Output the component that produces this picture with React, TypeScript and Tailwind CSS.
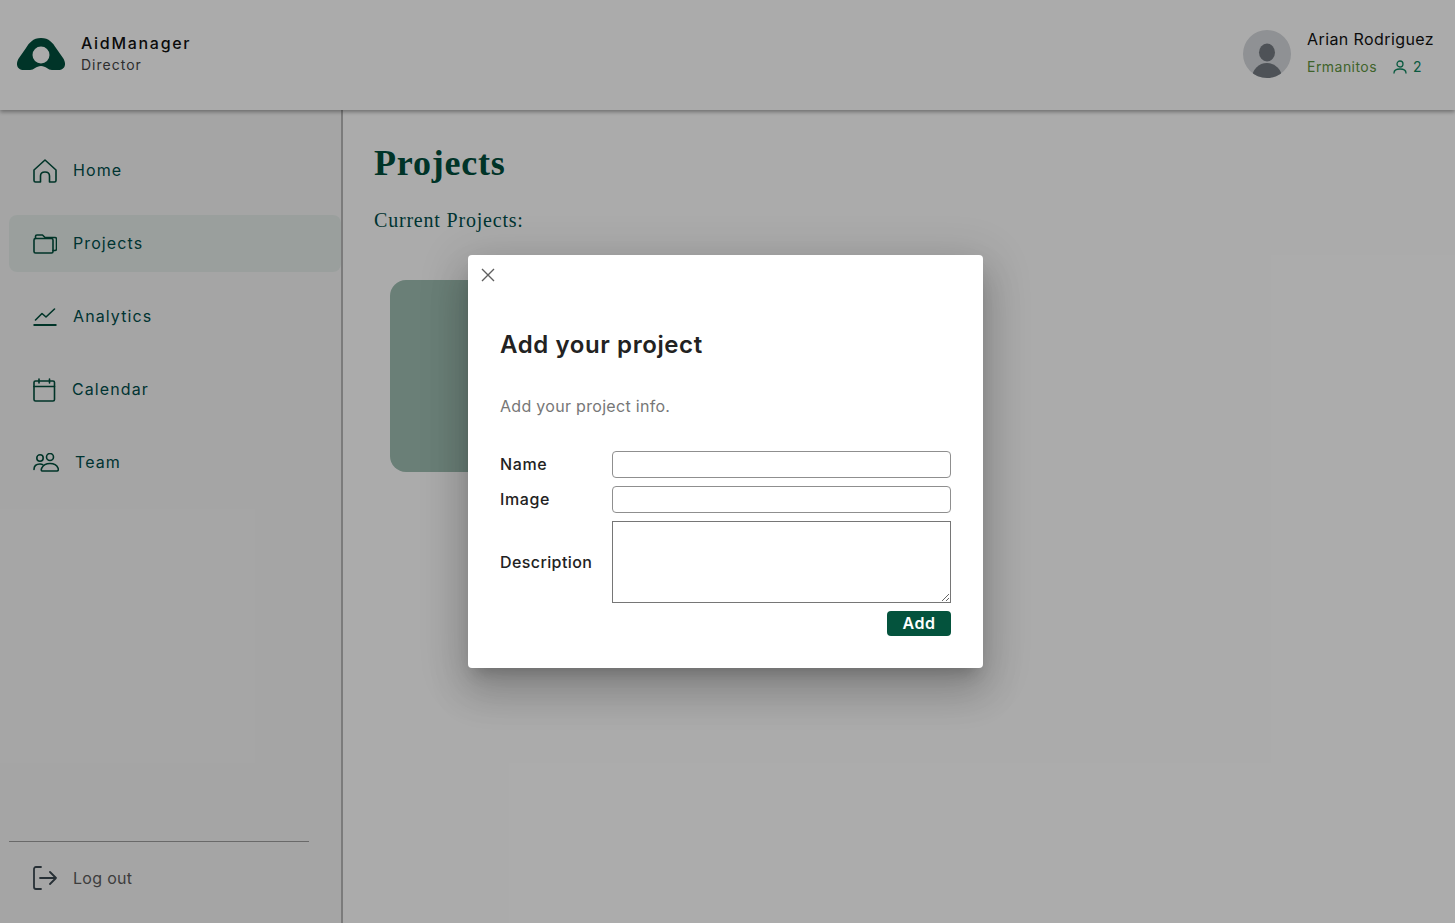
import React from "react";

const sans = "font-['Inter','Noto_Sans',sans-serif]";

function Logo() {
  return (
    <svg width="48" height="33" viewBox="0 0 48 33" className="shrink-0">
      <path
        fillRule="evenodd"
        fill="#004D3B"
        d="M24 0C16 0 12 5 9 10L2 20C-2 26 0 32 7 32H13C17 32 19 28 24 28C29 28 31 32 35 32H41C48 32 50 26 46 20L39 10C36 5 32 0 24 0ZM24 8.5A8.5 8.5 0 1 1 24 25.5A8.5 8.5 0 1 1 24 8.5Z"
      />
    </svg>
  );
}

function Avatar() {
  return (
    <svg width="48" height="48" viewBox="0 0 48 48" className="shrink-0">
      <circle cx="24" cy="24" r="24" fill="#D3D6DA" />
      <clipPath id="av">
        <circle cx="24" cy="24" r="24" />
      </clipPath>
      <g clipPath="url(#av)" fill="#747A80">
        <ellipse cx="24" cy="22.5" rx="8" ry="9" />
        <ellipse cx="24" cy="48" rx="15" ry="15" />
      </g>
    </svg>
  );
}

const stroke = {
  fill: "none",
  stroke: "#004D3B",
  strokeWidth: 1.6,
  strokeLinecap: "round" as const,
  strokeLinejoin: "round" as const,
};

function HomeIcon() {
  return (
    <svg width="24" height="24" viewBox="0 0 24 24" className="shrink-0" {...stroke}>
      <path d="M1 11L12 1L23 11V21.5C23 22.5 22.5 23 21.5 23H16.5V17C16.5 14.5 14.5 13 12 13C9.500 13 7.500 14.5 7.500 17V23H2.500C1.500 23 1 22.500 1 21.500Z" />
    </svg>
  );
}

function FolderIcon() {
  return (
    <svg width="24" height="20" viewBox="0 0 24 20" className="shrink-0" {...stroke}>
      <path d="M1 17V6C1 5 1.500 4.500 2.500 4.500H18.500C19.500 4.500 20 5 20 6V17.500C20 18.500 19.500 19 18.500 19H2.500C1.500 19 1 18.500 1 17.500Z" />
      <path d="M2.500 4.500V2.500C2.500 1.500 3 1 4 1H9.500L12 3.500H22C23 3.500 23.500 4 23.500 5V15C23.500 16 23 16.500 22 16.500H20" />
    </svg>
  );
}

function ChartIcon() {
  return (
    <svg width="24" height="18" viewBox="0 0 24 18" className="shrink-0" {...stroke}>
      <path d="M2.500 12L9 5.500L13 9L21.500 1" />
      <path d="M0.500 17H23.500" strokeWidth="2" strokeLinecap="butt" />
    </svg>
  );
}

function CalendarIcon() {
  return (
    <svg width="23" height="24" viewBox="0 0 23 24" className="shrink-0" {...stroke}>
      <rect x="1" y="3" width="20.500" height="20" rx="1.500" />
      <path d="M1 8.500H21.500M6 1V5M16.500 1V5" />
    </svg>
  );
}

function TeamIcon() {
  return (
    <svg width="26" height="19" viewBox="0 0 26 19" className="shrink-0" {...stroke}>
      <circle cx="7" cy="5" r="3.200" />
      <circle cx="17" cy="4" r="3.500" />
      <path d="M1 16.500C1 13 3.500 11 7 11C8 11 9 11.200 9.800 11.600" />
      <path d="M9.500 18C8 18 8 16.500 8.800 15C10 12.500 13 10.500 17 10.500C21 10.500 24 12.500 25 15C25.600 16.500 25.500 18 24 18Z" />
    </svg>
  );
}

function LogoutIcon() {
  const s = { ...stroke, stroke: "#3a4750", strokeWidth: 1.8 };
  return (
    <svg width="24" height="24" viewBox="0 0 24 24" className="shrink-0" {...s}>
      <path d="M8 1H3C1.800 1 1 1.800 1 3V21C1 22.200 1.800 23 3 23H8" />
      <path d="M7 12H23M17 6L23 12L17 18" />
    </svg>
  );
}

function NavItem({
  icon,
  label,
  active,
}: {
  icon: React.ReactNode;
  label: string;
  active?: boolean;
}) {
  return (
    <div
      className={`flex h-[57px] items-center gap-4 rounded-lg pl-6 ${active ? "bg-[#E3EBE8]" : ""}`}
    >
      {icon}
      <span className="pb-[2px] text-[16px] tracking-[1.1px] text-[#004D4B]">{label}</span>
    </div>
  );
}

export default function App() {
  return (
    <div className={`relative flex h-[923px] flex-col overflow-hidden bg-[#F4F4F4] ${sans}`}>
      {/* Header */}
      <header className="relative flex h-[110px] shrink-0 items-center justify-between bg-[#FDFDFD] pb-[2px] pl-[17px] pr-[21px] shadow-[0_2px_4px_rgba(0,0,0,0.35)]">
        <div className="flex items-center gap-4">
          <Logo />
          <div className="mb-[2px] flex flex-col gap-[2px]">
            <span className="text-[16px] leading-[22px] font-medium tracking-[1.7px] text-[#111]">
              AidManager
            </span>
            <span className="text-[14px] leading-[18px] tracking-[1px] text-[#444]">Director</span>
          </div>
        </div>
        <div className="flex items-center gap-4">
          <Avatar />
          <div className="flex flex-col gap-[8px] pb-[4px]">
            <span className="text-[16px] leading-[22px] tracking-[0.4px] text-[#111]">Arian Rodriguez</span>
            <div className="flex items-center gap-4">
              <span className="text-[14px] leading-[18px] tracking-[0.45px] text-[#5E9341]">Ermanitos</span>
              <span className="flex items-center gap-[6px] text-[14px] leading-[18px] text-[#10855F]">
                <svg width="14" height="14" viewBox="0 0 14 14" fill="none" stroke="#10855F" strokeWidth="1.300">
                  <circle cx="7" cy="4" r="3" />
                  <path d="M1 13C1 10 3.500 9 7 9C10.500 9 13 10 13 13" strokeLinecap="round" />
                </svg>
                2
              </span>
            </div>
          </div>
        </div>
      </header>

      <div className="flex min-h-0 flex-1">
        {/* Sidebar */}
        <aside className="flex w-[343px] shrink-0 flex-col justify-between border-r-2 border-[#b5b5b5] pb-[9px] pl-[9px] pt-[32px]">
          <nav className="flex flex-col gap-4">
            <NavItem icon={<HomeIcon />} label="Home" />
            <NavItem icon={<FolderIcon />} label="Projects" active />
            <NavItem icon={<ChartIcon />} label="Analytics" />
            <NavItem icon={<CalendarIcon />} label="Calendar" />
            <NavItem icon={<TeamIcon />} label="Team" />
          </nav>
          <div className="flex flex-col">
            <div className="w-[300px] border-t border-[#9b9b9b]" />
            <div className="flex h-[72px] items-center gap-4 pl-6">
              <LogoutIcon />
              <span className="text-[16px] tracking-[0.3px] text-[#5b5b5b]">Log out</span>
            </div>
          </div>
        </aside>

        {/* Main */}
        <main className="flex-1 bg-[#FDFDFD] pl-[31px] pt-[30px]">
          <h1 className="font-['Liberation_Serif',serif] text-[36px] leading-[46px] font-bold tracking-[0.8px] text-[#004D3B]">
            Projects
          </h1>
          <p className="mt-[21px] font-['Liberation_Serif',serif] text-[20px] leading-[26px] tracking-[0.8px] text-[#004D4B]">
            Current Projects:
          </p>
          <div className="ml-[16px] mt-[47px] h-[192px] w-[300px] rounded-2xl bg-[#9DBCB0]" />
        </main>
      </div>

      {/* Dialog */}
      <div className="absolute inset-0 flex items-center justify-center bg-black/32 pr-1">
        <div className="relative h-[413px] w-[515px] rounded bg-white px-8 pt-[74px] shadow-[0_11px_15px_-7px_rgba(0,0,0,0.2),0_24px_38px_3px_rgba(0,0,0,0.14),0_9px_46px_8px_rgba(0,0,0,0.12)]">
          <svg
            width="14"
            height="14"
            viewBox="0 0 14 14"
            className="absolute left-[13px] top-[13px]"
            fill="none"
            stroke="#5f5f5f"
            strokeWidth="1.400"
          >
            <path d="M1 1L13 13M13 1L1 13" />
          </svg>
          <h2 className="text-[24px] leading-[32px] font-semibold tracking-[0.6px] text-[#222]">Add your project</h2>
          <p className="mt-[33px] text-[16px] leading-[24px] tracking-[0.3px] text-[#777]">Add your project info.</p>
          <form className="mt-[33px] grid grid-cols-[112px_1fr] items-center gap-y-2">
            <label className="pb-[2px] text-[16px] font-medium tracking-[0.6px] text-[#222]">Name</label>
            <input className="h-[27px] rounded-[4px] border border-[#8f8f8f] outline-none" />
            <label className="pb-[2px] text-[16px] font-medium tracking-[0.6px] text-[#222]">Image</label>
            <input className="h-[27px] rounded-[4px] border border-[#8f8f8f] outline-none" />
            <label className="text-[16px] font-medium tracking-[0.4px] text-[#222]">Description</label>
            <textarea className="block h-[82px] border border-[#767676] outline-none" />
          </form>
          <div className="mt-2 flex justify-end">
            <button className="h-[25px] w-[64px] rounded-[4px] bg-[#04533D] pb-[2px] text-[16px] font-semibold tracking-[0.5px] text-white">
              Add
            </button>
          </div>
        </div>
      </div>
    </div>
  );
}
